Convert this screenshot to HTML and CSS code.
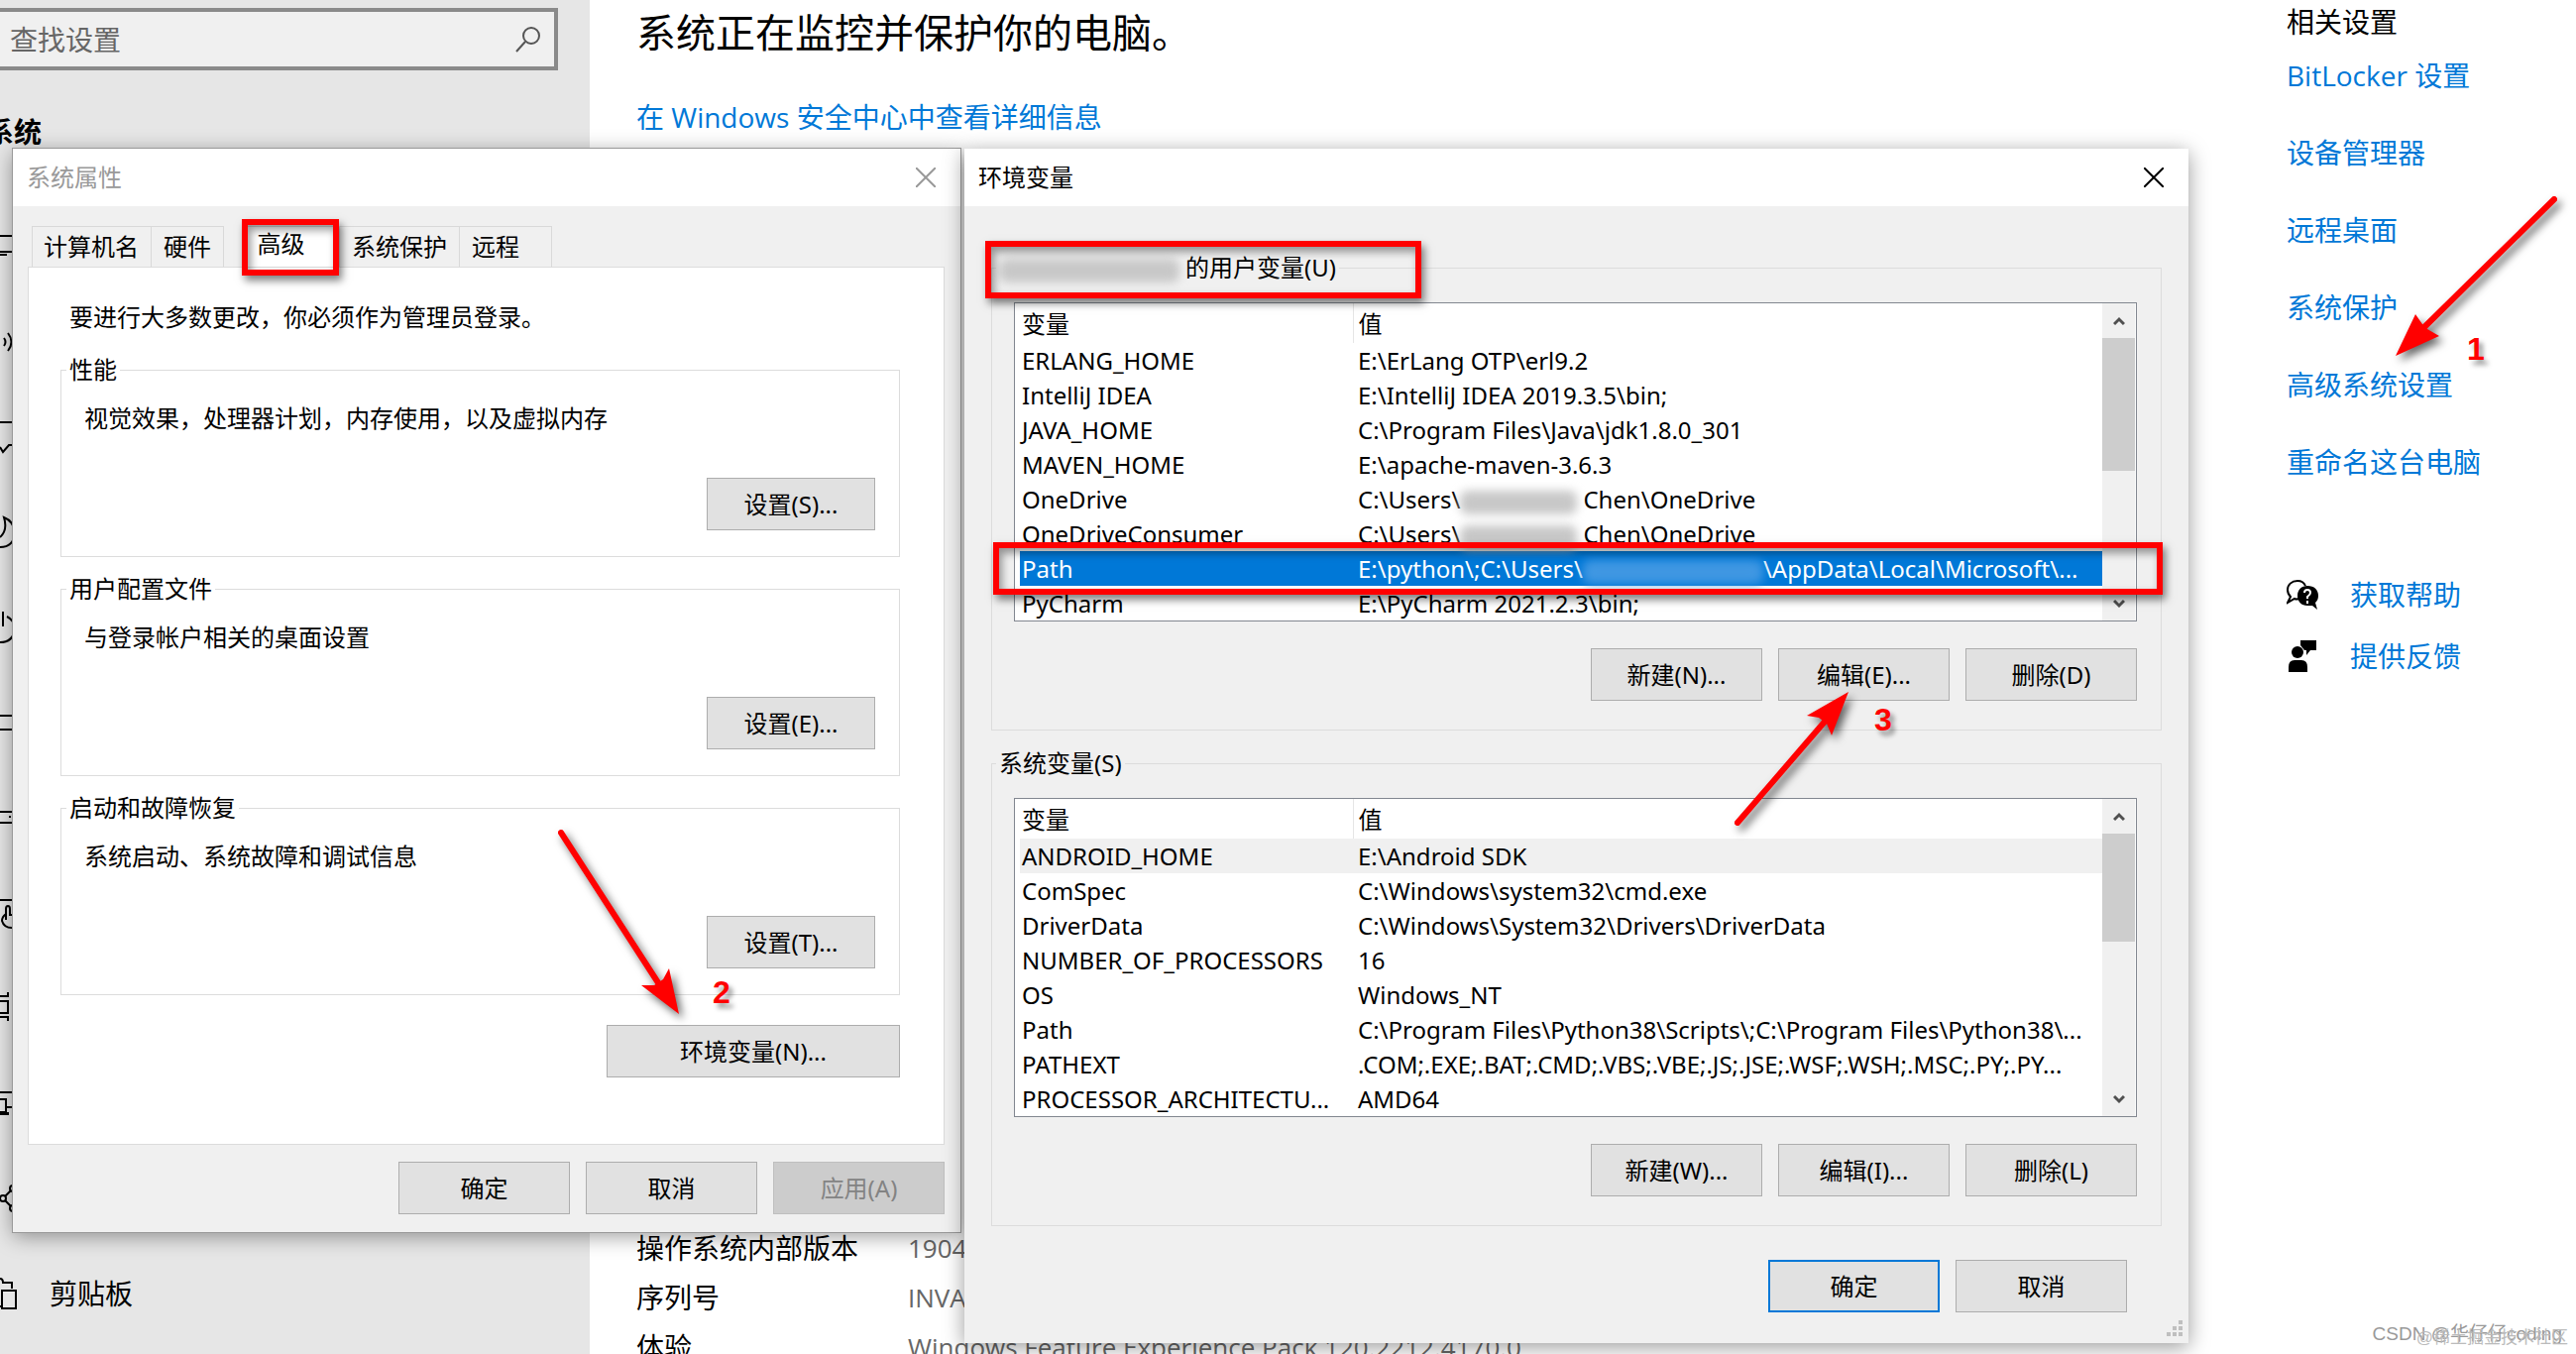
FILE: index.html
```html
<!DOCTYPE html>
<html lang="zh-CN">
<head>
    <meta charset="UTF-8">
    <meta name="viewport" content="width=device-width, initial-scale=1.0">
    <title>系统设置 - 环境变量</title>
    <link rel="stylesheet" href="styles.css">
</head>
<body>
    <div class="settings">
        <aside class="sidebar">
            <div class="search">
                <input type="text" aria-label="查找设置" placeholder="查找设置">
                <svg width="28" height="28" viewBox="0 0 28 28"><circle cx="17" cy="10" r="8"/><path d="M11 16L2 26"/></svg>
            </div>
            <h2>系统</h2>
            <nav>
                <a href="#" aria-label="显示"><svg viewBox="0 0 18 40"><path d="M0 9H18M0 25H18M0 28H7"/></svg></a>
                <a href="#" aria-label="声音"><svg viewBox="0 0 18 40"><path d="M4 16Q7 20 4 24M8 11Q15 20 8 29M13 6Q22 20 13 34"/></svg></a>
                <a href="#" aria-label="通知和操作"><svg viewBox="0 0 18 40"><path d="M0 5H18M0 30L3 35L9 28H18"/></svg></a>
                <a href="#" aria-label="专注助手"><svg viewBox="0 0 18 40"><path d="M0 25Q8 18 4 5Q14 9 15 20Q14 35 0 35"/></svg></a>
                <a href="#" aria-label="电源和睡眠"><svg viewBox="0 0 18 40"><path d="M3 4V19M7 9Q15 13 15 22Q13 35 0 35"/></svg></a>
                <a href="#" aria-label="电池"><svg viewBox="0 0 18 40"><path d="M0 13H18M0 27H18"/></svg></a>
                <a href="#" aria-label="存储"><svg viewBox="0 0 18 40"><path d="M0 14H18M0 25H18M9 19H11M13 19H15"/></svg></a>
                <a href="#" aria-label="平板电脑"><svg viewBox="0 0 18 40"><path d="M0 7H18M6 27V16Q6 13 8 13Q10 13 10 16V22H16M6 21Q2 24 2 28Q4 35 12 35H18"/></svg></a>
                <a href="#" aria-label="多任务处理"><svg viewBox="0 0 18 40"><path d="M0 8H8V4M0 13H8V25H0M0 29H8V33"/></svg></a>
                <a href="#" aria-label="投影到此电脑"><svg viewBox="0 0 18 40"><path d="M0 9H18M0 16H6V29H0M6 24H18M0 31H8V29"/></svg></a>
                <a href="#" aria-label="体验共享"><svg viewBox="0 0 18 40"><circle cx="3" cy="20" r="3"/><circle cx="13" cy="10" r="3"/><circle cx="13" cy="30" r="3"/><path d="M0 20H1M5 18L11 12M5 22L11 28"/></svg></a>
                <a href="#"><svg viewBox="0 0 18 40"><path d="M0 5Q3 5 3 9H12V15M0 33H1M2 17H16V35H2Z"/></svg>剪贴板</a>
            </nav>
        </aside>

        <main>
            <h1>系统正在监控并保护你的电脑。</h1>
            <a href="#">在 Windows 安全中心中查看详细信息</a>
            <dl class="specs">
                <dt>操作系统内部版本</dt><dd>19044</dd>
                <dt>序列号</dt><dd>INVALID</dd>
                <dt>体验</dt><dd>Windows Feature Experience Pack 120.2212.4170.0</dd>
            </dl>
        </main>

        <aside class="related">
            <h3>相关设置</h3>
            <a href="#">BitLocker 设置</a>
            <a href="#">设备管理器</a>
            <a href="#">远程桌面</a>
            <a href="#">系统保护</a>
            <a href="#">高级系统设置</a>
            <a href="#">重命名这台电脑</a>
            <div class="support">
                <svg width="32" height="32" viewBox="0 0 32 32">
                    <path d="M11 2C5 2 1 6 1 11C1 14 2 16 4 18L1 24L8 20Q10 21 12 20M19 7Q17 2 11 2" fill="none" stroke="#000" stroke-width="2"/>
                    <path d="M21 7C15 7 11 11 11 17C11 23 15 27 21 27L26 27L31 31L29 24C31 22 32 20 32 17C32 11 28 7 21 7Z"/>
                    <path d="M18 14Q18 11 21 11Q24 11 24 14Q24 16 21 18V20M21 22V25" fill="none" stroke="#fff" stroke-width="2"/>
                </svg>
                <a href="#">获取帮助</a>
            </div>
            <div class="support">
                <svg width="32" height="32" viewBox="0 0 32 32">
                    <circle cx="11" cy="12" r="6"/>
                    <path d="M2 32V27Q2 20 8 20H15Q21 20 21 27V32ZM14 0H30V10H24L20 15V10H18L14 5Z"/>
                </svg>
                <a href="#">提供反馈</a>
            </div>
        </aside>
    </div>

    <section class="window properties" aria-label="系统属性">
        <header>
            <span>系统属性</span>
            <button class="close" aria-label="关闭"><svg width="20" height="20" viewBox="0 0 20 20"><path d="M0 0L20 20M20 0L0 20"/></svg></button>
        </header>
        <div class="tabs">
            <button class="tab">计算机名</button>
            <button class="tab">硬件</button>
            <button class="tab active">高级</button>
            <button class="tab">系统保护</button>
            <button class="tab">远程</button>
        </div>
        <div class="tab-panel">
            <p>要进行大多数更改，你必须作为管理员登录。</p>
            <fieldset>
                <legend>性能</legend>
                <p>视觉效果，处理器计划，内存使用，以及虚拟内存</p>
                <button class="button">设置(S)...</button>
            </fieldset>
            <fieldset>
                <legend>用户配置文件</legend>
                <p>与登录帐户相关的桌面设置</p>
                <button class="button">设置(E)...</button>
            </fieldset>
            <fieldset>
                <legend>启动和故障恢复</legend>
                <p>系统启动、系统故障和调试信息</p>
                <button class="button">设置(T)...</button>
            </fieldset>
            <button class="button wide">环境变量(N)...</button>
        </div>
        <footer class="buttons">
            <button class="button">确定</button>
            <button class="button">取消</button>
            <button class="button" disabled>应用(A)</button>
        </footer>
    </section>

    <section class="window variables" aria-label="环境变量">
        <header>
            <span>环境变量</span>
            <button class="close" aria-label="关闭"><svg width="20" height="20" viewBox="0 0 20 20"><path d="M0 0L20 20M20 0L0 20"/></svg></button>
        </header>
        <fieldset>
            <legend><span class="redacted long"></span>的用户变量(U)</legend>
            <div class="list">
                <table>
                    <thead><tr><th>变量</th><th>值</th></tr></thead>
                    <tbody>
                        <tr><td>ERLANG_HOME</td><td>E:\ErLang OTP\erl9.2</td></tr>
                        <tr><td>IntelliJ IDEA</td><td>E:\IntelliJ IDEA 2019.3.5\bin;</td></tr>
                        <tr><td>JAVA_HOME</td><td>C:\Program Files\Java\jdk1.8.0_301</td></tr>
                        <tr><td>MAVEN_HOME</td><td>E:\apache-maven-3.6.3</td></tr>
                        <tr><td>OneDrive</td><td>C:\Users\<span class="redacted"></span>Chen\OneDrive</td></tr>
                        <tr><td>OneDriveConsumer</td><td>C:\Users\<span class="redacted"></span>Chen\OneDrive</td></tr>
                        <tr class="selected"><td>Path</td><td>E:\python\;C:\Users\<span class="redacted long"></span>\AppData\Local\Microsoft\...</td></tr>
                        <tr><td>PyCharm</td><td>E:\PyCharm 2021.2.3\bin;</td></tr>
                    </tbody>
                </table>
                <div class="scrollbar">
                    <svg viewBox="0 0 12 12"><path d="M1 9L6 4L11 9"/></svg>
                    <div class="thumb"></div>
                    <svg viewBox="0 0 12 12"><path d="M1 3L6 8L11 3"/></svg>
                </div>
            </div>
            <div class="buttons">
                <button class="button">新建(N)...</button>
                <button class="button">编辑(E)...</button>
                <button class="button">删除(D)</button>
            </div>
        </fieldset>
        <fieldset>
            <legend>系统变量(S)</legend>
            <div class="list">
                <table>
                    <thead><tr><th>变量</th><th>值</th></tr></thead>
                    <tbody>
                        <tr class="hot"><td>ANDROID_HOME</td><td>E:\Android SDK</td></tr>
                        <tr><td>ComSpec</td><td>C:\Windows\system32\cmd.exe</td></tr>
                        <tr><td>DriverData</td><td>C:\Windows\System32\Drivers\DriverData</td></tr>
                        <tr><td>NUMBER_OF_PROCESSORS</td><td>16</td></tr>
                        <tr><td>OS</td><td>Windows_NT</td></tr>
                        <tr><td>Path</td><td>C:\Program Files\Python38\Scripts\;C:\Program Files\Python38\...</td></tr>
                        <tr><td>PATHEXT</td><td>.COM;.EXE;.BAT;.CMD;.VBS;.VBE;.JS;.JSE;.WSF;.WSH;.MSC;.PY;.PY...</td></tr>
                        <tr><td>PROCESSOR_ARCHITECTU...</td><td>AMD64</td></tr>
                    </tbody>
                </table>
                <div class="scrollbar">
                    <svg viewBox="0 0 12 12"><path d="M1 9L6 4L11 9"/></svg>
                    <div class="thumb short"></div>
                    <svg viewBox="0 0 12 12"><path d="M1 3L6 8L11 3"/></svg>
                </div>
            </div>
            <div class="buttons">
                <button class="button">新建(W)...</button>
                <button class="button">编辑(I)...</button>
                <button class="button">删除(L)</button>
            </div>
        </fieldset>
        <footer class="buttons">
            <button class="button default">确定</button>
            <button class="button">取消</button>
        </footer>
        <svg class="grip" width="16" height="16" viewBox="0 0 16 16"><path d="M12 0h4v4h-4zM6 6h4v4H6zM12 6h4v4h-4zM0 12h4v4H0zM6 12h4v4H6zM12 12h4v4h-4z"/></svg>
    </section>

    <!-- Tutorial marks -->
    <div class="mark mark-tab"></div>
    <div class="mark mark-user"></div>
    <div class="mark mark-path"></div>
    <svg class="arrow arrow-1" width="180" height="180" viewBox="0 0 180 180"><path d="M167 11L36 140" class="shaft"/><path d="M7 169L27 127L34 137L39 142L51 149Z"/></svg>
    <svg class="arrow arrow-2" width="140" height="200" viewBox="0 0 140 200"><path d="M6 10L105 163" class="shaft"/><path d="M125 193L87 164L100 164L109 158L115 147Z"/></svg>
    <svg class="arrow arrow-3" width="130" height="150" viewBox="0 0 130 150"><path d="M12 140L100 38" class="shaft"/><path d="M124 8L82 32L94 34L102 40L107 52Z"/></svg>
    <span class="step step-1">1</span>
    <span class="step step-2">2</span>
    <span class="step step-3">3</span>

    <div class="watermark csdn">CSDN @华仔仔coding</div>
    <div class="watermark juejin">@稀土掘金技术社区</div>
</body>
</html>
```
FILE: styles.css
```css
* {
    margin: 0;
    padding: 0;
    box-sizing: border-box;
}

body {
    position: relative;
    height: 100vh;
    overflow: hidden;
    background-color: #fff;
    color: #000;
    font-family: "Open Sans", "Noto Sans CJK SC", sans-serif;
    font-size: 24px;
    line-height: 32px;
}

button, input {
    font: inherit;
    color: inherit;
}

a {
    color: #0078d7;
    text-decoration: none;
}

/* Settings page */
.settings {
    display: flex;
    min-height: 100%;
    font-size: 28px;
    line-height: 40px;
}

.sidebar {
    width: 595px;
    padding-top: 8px;
    background-color: #e6e6e6;
}

.search {
    display: flex;
    align-items: center;
    width: 563px;
    height: 63px;
    padding: 0 12px 0 10px;
    border: 4px solid #8a8a8a;
    border-left: none;
    background-color: #f0f0f0;
}

.search input {
    flex: 1;
    border: none;
    outline: none;
    background: none;
}

.search input::placeholder {
    color: #666;
}

.search svg {
    fill: none;
    stroke: #555;
    stroke-width: 2;
}

.sidebar h2 {
    margin: 42px 0 48px -14px;
    font-size: 28px;
}

.sidebar nav a {
    display: flex;
    align-items: center;
    gap: 32px;
    height: 96px;
    color: #000;
}

.sidebar nav svg {
    width: 18px;
    height: 40px;
    fill: none;
    stroke: #000;
    stroke-width: 2;
}

main {
    flex: 1;
    padding: 5px 0 0 47px;
}

main h1 {
    margin-bottom: 37px;
    font-size: 40px;
    font-weight: normal;
    line-height: 56px;
}

main > a {
    display: block;
}

.specs {
    display: grid;
    grid-template-columns: 274px 1fr;
    margin-top: 1096px;
    line-height: 50px;
}

.specs dd {
    color: #666;
    font-size: 26px;
}

.related {
    width: 292px;
    padding-top: 2px;
}

.related h3 {
    margin-bottom: 14px;
    font-size: 28px;
    font-weight: normal;
}

.related > a {
    display: block;
    margin-bottom: 38px;
}

.support {
    display: flex;
    align-items: center;
    gap: 32px;
    height: 62px;
}

.related > a + .support {
    margin-top: 83px;
}

/* Dialog windows */
.window {
    position: absolute;
    top: 150px;
    background-color: #f0f0f0;
    box-shadow: 0 4px 20px rgba(0, 0, 0, 0.4);
    font-family: "Noto Sans", "Noto Sans CJK SC", sans-serif;
}

.window header {
    display: flex;
    justify-content: space-between;
    align-items: center;
    height: 58px;
    padding: 0 25px 0 14px;
    background-color: #fff;
}

.close {
    width: 20px;
    height: 20px;
    border: none;
    background: none;
}

.close svg {
    display: block;
    fill: none;
    stroke: currentColor;
    stroke-width: 2;
}

.properties {
    left: 13px;
    width: 956px;
    padding: 0 16px 18px 15px;
    outline: 1px solid #999;
}

.properties header {
    margin: 0 -16px 20px -15px;
    color: #999;
}

.variables {
    left: 973px;
    width: 1235px;
    padding: 0 27px 31px;
}

.variables header {
    margin: 0 -27px 46px;
}

.button {
    width: 173px;
    height: 53px;
    border: 1px solid #adadad;
    background-color: #e1e1e1;
}

.button:hover {
    background-color: #e5f1fb;
}

.button.default {
    border: 2px solid #0078d7;
}

.button:disabled {
    border-color: #bfbfbf;
    background-color: #ccc;
    color: #838383;
}

.buttons {
    display: flex;
    justify-content: flex-end;
    gap: 16px;
}

fieldset {
    border: 1px solid #dcdcdc;
}

legend {
    padding: 0 3px;
}

.tabs {
    display: flex;
    padding-left: 4px;
}

.tab {
    height: 41px;
    padding: 0 12px;
    border: 1px solid #d9d9d9;
    border-bottom: none;
    border-left: none;
    background-color: #f0f0f0;
}

.tab:first-child {
    padding-left: 11px;
    border-left: 1px solid #d9d9d9;
}

.tab:last-child {
    padding-right: 32px;
}

.tab.active {
    width: 98px;
    padding: 0 30px 6px 10px;
    margin-left: 19px;
    background-color: #fff;
}

.tab-panel {
    display: flex;
    flex-direction: column;
    gap: 16px;
    height: 886px;
    padding: 34px 44px 0 32px;
    border: 1px solid #dcdcdc;
    background-color: #fff;
}

.tab-panel > p {
    margin: 0 0 5px 9px;
}

.tab-panel fieldset {
    padding: 17px 24px 26px 23px;
}

.tab-panel legend {
    margin-left: -18px;
}

.tab-panel fieldset .button {
    display: block;
    width: 170px;
    margin: 44px 0 0 auto;
}

.tab-panel .wide {
    width: 296px;
    margin: 14px 0 0 auto;
}

.properties footer {
    margin-top: 17px;
}

.variables fieldset {
    padding: 19px 24px 29px 22px;
    margin-bottom: 17px;
}

.variables legend {
    margin-left: -18px;
}

.variables .buttons {
    margin-top: 27px;
}

.variables footer.buttons {
    margin: 34px 35px 0 0;
}

/* Variable lists */
.list {
    display: flex;
    justify-content: space-between;
    height: 322px;
    padding: 0 1px 0 5px;
    border: 1px solid #828790;
    background-color: #fff;
}

table {
    flex: 1;
    border-collapse: collapse;
    table-layout: fixed;
}

th, td {
    height: 35px;
    padding-left: 5px;
    line-height: 35px;
    font-weight: normal;
    text-align: left;
    white-space: nowrap;
}

th {
    height: 40px;
}

th:first-child, td:first-child {
    width: 336px;
    padding-left: 2px;
}

th:first-child {
    border-right: 1px solid #e5e5e5;
}

.selected {
    background-color: #0078d7;
    color: #fff;
}

.hot {
    background-color: #f0f0f0;
}

.scrollbar {
    display: flex;
    flex-direction: column;
    width: 33px;
    background-color: #f0f0f0;
}

.scrollbar svg {
    width: 12px;
    height: 12px;
    margin: 12px auto 11px;
    fill: none;
    stroke: #505050;
    stroke-width: 3;
}

.thumb {
    height: 134px;
    margin-bottom: auto;
    background-color: #cdcdcd;
}

.thumb.short {
    height: 109px;
}

.redacted {
    display: inline-block;
    width: 118px;
    height: 24px;
    margin: 0 6px 0 0;
    border-radius: 8px;
    vertical-align: middle;
    background-color: #c8c8c8;
    filter: blur(5px);
}

.redacted.long {
    width: 182px;
}

.selected .redacted {
    margin-right: 0;
    background-color: #3f97e2;
}

.grip {
    position: absolute;
    right: 6px;
    bottom: 7px;
    fill: #bfbfbf;
}

/* Marks drawn over the windows */
.mark {
    position: absolute;
    border: 6px solid #f00;
    box-shadow: 3px 5px 8px rgba(0, 0, 0, 0.5), inset 3px 5px 8px rgba(0, 0, 0, 0.4);
}

.mark-tab {
    left: 244px;
    top: 221px;
    width: 98px;
    height: 57px;
}

.mark-user {
    left: 994px;
    top: 243px;
    width: 440px;
    height: 58px;
}

.mark-path {
    left: 1002px;
    top: 547px;
    width: 1180px;
    height: 53px;
}

.arrow {
    position: absolute;
    overflow: visible;
    fill: #f00;
    filter: drop-shadow(4px 5px 4px rgba(0, 0, 0, 0.6));
}

.arrow .shaft {
    stroke: #f00;
    stroke-width: 6;
    stroke-linecap: round;
}

.arrow-1 {
    left: 2410px;
    top: 190px;
}

.arrow-2 {
    left: 560px;
    top: 830px;
}

.arrow-3 {
    left: 1741px;
    top: 690px;
}

.step {
    position: absolute;
    color: #f00;
    font-family: "Liberation Sans", Arial, sans-serif;
    font-size: 32px;
    font-weight: bold;
    text-shadow: 4px 5px 5px rgba(0, 0, 0, 0.4);
}

.step-1 {
    left: 2489px;
    top: 336px;
}

.step-2 {
    left: 719px;
    top: 985px;
}

.step-3 {
    left: 1891px;
    top: 710px;
}

.watermark {
    position: absolute;
    color: #999;
    font-family: "Liberation Sans", "Noto Sans CJK SC", sans-serif;
}

.watermark.csdn {
    right: 14px;
    bottom: 4px;
    font-size: 19px;
}

.watermark.juejin {
    right: 8px;
    bottom: 0;
    color: #bbb;
    font-size: 17px;
}
```
